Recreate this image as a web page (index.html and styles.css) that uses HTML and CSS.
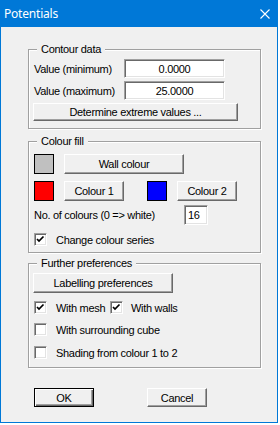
FILE: index.html
```html
<!DOCTYPE html>
<html>
<head>
    <meta charset="UTF-8">
    <link rel="stylesheet" href="styles.css">
</head>
<body>
    <div class="window">
        <div class="titlebar">
            <span class="title">Potentials</span>
            <svg class="close" width="10" height="10" viewBox="0 0 10 10">
                <path d="M0.5 0.5 L9.5 9.5 M9.5 0.5 L0.5 9.5" stroke="#fff" stroke-width="1.1" fill="none"/>
            </svg>
        </div>

        <div class="content">
            <div class="group group-contour">
                <span class="legend">Contour data</span>
                <div class="row row-min">
                    <span class="label">Value (minimum)</span>
                    <input class="edit" type="text" value="0.0000" readonly>
                </div>
                <div class="row row-max">
                    <span class="label">Value (maximum)</span>
                    <input class="edit" type="text" value="25.0000" readonly>
                </div>
                <button class="btn btn-extreme">Determine extreme values ...</button>
            </div>

            <div class="group group-fill">
                <span class="legend">Colour fill</span>
                <div class="row row-wall">
                    <span class="swatch swatch-grey"></span>
                    <button class="btn btn-wall">Wall colour</button>
                </div>
                <div class="row row-colours">
                    <span class="swatch swatch-red"></span>
                    <button class="btn btn-colour">Colour 1</button>
                    <span class="swatch swatch-blue"></span>
                    <button class="btn btn-colour">Colour 2</button>
                </div>
                <div class="row row-count">
                    <span class="label label-count">No. of colours (0 =&gt; white)</span>
                    <input class="edit edit-count" type="text" value="16" readonly>
                </div>
                <div class="row row-check row-series">
                    <span class="check checked"></span>
                    <span class="check-text">Change colour series</span>
                </div>
            </div>

            <div class="group group-prefs">
                <span class="legend">Further preferences</span>
                <button class="btn btn-labelling">Labelling preferences</button>
                <div class="row row-check row-mesh">
                    <span class="check checked"></span>
                    <span class="check-text check-text-mesh">With mesh</span>
                    <span class="check checked"></span>
                    <span class="check-text check-text-walls">With walls</span>
                </div>
                <div class="row row-check row-cube">
                    <span class="check"></span>
                    <span class="check-text">With surrounding cube</span>
                </div>
                <div class="row row-check row-shading">
                    <span class="check"></span>
                    <span class="check-text">Shading from colour 1 to 2</span>
                </div>
            </div>

            <div class="footer">
                <button class="btn btn-footer btn-default">OK</button>
                <button class="btn btn-footer btn-cancel">Cancel</button>
            </div>
        </div>
    </div>
</body>
</html>
```

FILE: styles.css
```css
body {
    margin: 0;
    background: #fff;
    font-family: "Liberation Sans", Arial, sans-serif;
    font-size: 11px;
    letter-spacing: -0.3px;
    color: #000;
}

.window {
    width: 278px;
    height: 423px;
    box-sizing: border-box;
    border: 1px solid #0078d7;
    border-top: 0;
    background: #f0f0f0;
}

.titlebar {
    height: 27px;
    background: #0078d7;
    color: #fff;
    display: flex;
    align-items: center;
    justify-content: space-between;
    padding: 0 7px 0 3px;
    font-family: "Noto Sans", sans-serif;
    font-size: 12px;
    letter-spacing: -0.2px;
}

.close {
    display: block;
}

.content {
    padding: 22px 0 0 27px;
}

/* group box with etched frame */
.group {
    width: 233px;
    box-sizing: border-box;
    border: 1px solid #a0a0a0;
    box-shadow: inset 1px 1px #fff, 1px 1px #fff;
    padding: 0 4px;
}

.legend {
    display: block;
    width: fit-content;
    margin: -7px 0 0 4px;
    padding: 0 4px;
    line-height: 13px;
    background: #f0f0f0;
}

.row {
    display: flex;
    align-items: center;
}

.label {
    width: 91px;
    padding-left: 1px;
    box-sizing: border-box;
}

/* sunken edit field */
.edit {
    width: 101px;
    height: 19px;
    box-sizing: border-box;
    margin: 0;
    padding: 0;
    border: 1px solid;
    border-color: #a0a0a0 #fff #fff #a0a0a0;
    box-shadow: inset 1px 1px #696969, inset -1px -1px #e3e3e3;
    background: #fff;
    font: inherit;
    letter-spacing: inherit;
    color: #000;
    text-align: center;
    outline: none;
}

/* raised push button */
.btn {
    box-sizing: border-box;
    margin: 0;
    padding: 0;
    border: 1px solid;
    border-color: #fff #696969 #696969 #fff;
    box-shadow: inset -1px -1px #a0a0a0;
    background: #f0f0f0;
    font: inherit;
    letter-spacing: inherit;
    color: #000;
}

.btn-default {
    border-color: #000;
    box-shadow: inset 1px 1px #fff, inset -1px -1px #696969, inset -2px -2px #a0a0a0;
}

.group-contour {
    margin-top: 0;
    padding-bottom: 7px;
}

.row-min {
    margin-top: 3px;
}

.row-max {
    margin-top: 3px;
}

.btn-extreme {
    display: block;
    width: 205px;
    height: 18px;
    margin-top: 3px;
}

.group-fill {
    margin-top: 12px;
    padding-bottom: 6px;
}

.swatch {
    width: 20px;
    height: 20px;
    box-sizing: border-box;
    border: 1px solid #000;
    margin-left: 1px;
}

.swatch-grey {
    background: #c0c0c0;
}

.swatch-red {
    background: #ff0000;
}

.swatch-blue {
    background: #0000ff;
    margin-left: 23px;
}

.btn-wall,
.btn-colour {
    height: 20px;
    margin-left: 10px;
}

.btn-wall {
    width: 120px;
}

.btn-colour {
    width: 60px;
}

.row-wall {
    margin-top: 6px;
}

.row-colours {
    margin-top: 7px;
}

.row-count {
    margin-top: 4px;
}

.label-count {
    width: 151px;
}

.edit-count {
    width: 24px;
    height: 20px;
    text-align: left;
    padding-left: 3px;
}

/* check boxes */
.check {
    width: 13px;
    height: 13px;
    box-sizing: border-box;
    margin-left: 1px;
    border: 1px solid;
    border-color: #a0a0a0 #fff #fff #a0a0a0;
    box-shadow: inset 1px 1px #696969, inset -1px -1px #e3e3e3;
    background: #fff;
    flex-shrink: 0;
}

.check.checked {
    background: #fff url("data:image/svg+xml,%3Csvg xmlns='http://www.w3.org/2000/svg' width='11' height='11'%3E%3Cpath d='M2 5 L4 7 L8.5 2.5' stroke='%23000' stroke-width='1.7' fill='none'/%3E%3C/svg%3E") no-repeat 0 0;
}

.check-text {
    margin-left: 9px;
}

.row-check {
    height: 13px;
}

.row-series {
    margin-top: 8px;
}

.group-prefs {
    margin-top: 10px;
    padding-bottom: 8px;
}

.btn-labelling {
    display: block;
    width: 140px;
    height: 20px;
    margin-top: 3px;
}

.check-text-mesh {
    width: 53px;
}

.check-text-walls {
    margin-left: 8px;
}

.row-mesh {
    margin-top: 8px;
}

.row-cube {
    margin-top: 9px;
}

.row-shading {
    margin-top: 10px;
}

.footer {
    display: flex;
    margin-top: 20px;
    padding-left: 6px;
}

.btn-footer {
    width: 60px;
    height: 19px;
}

.btn-cancel {
    margin-left: 53px;
}
```
